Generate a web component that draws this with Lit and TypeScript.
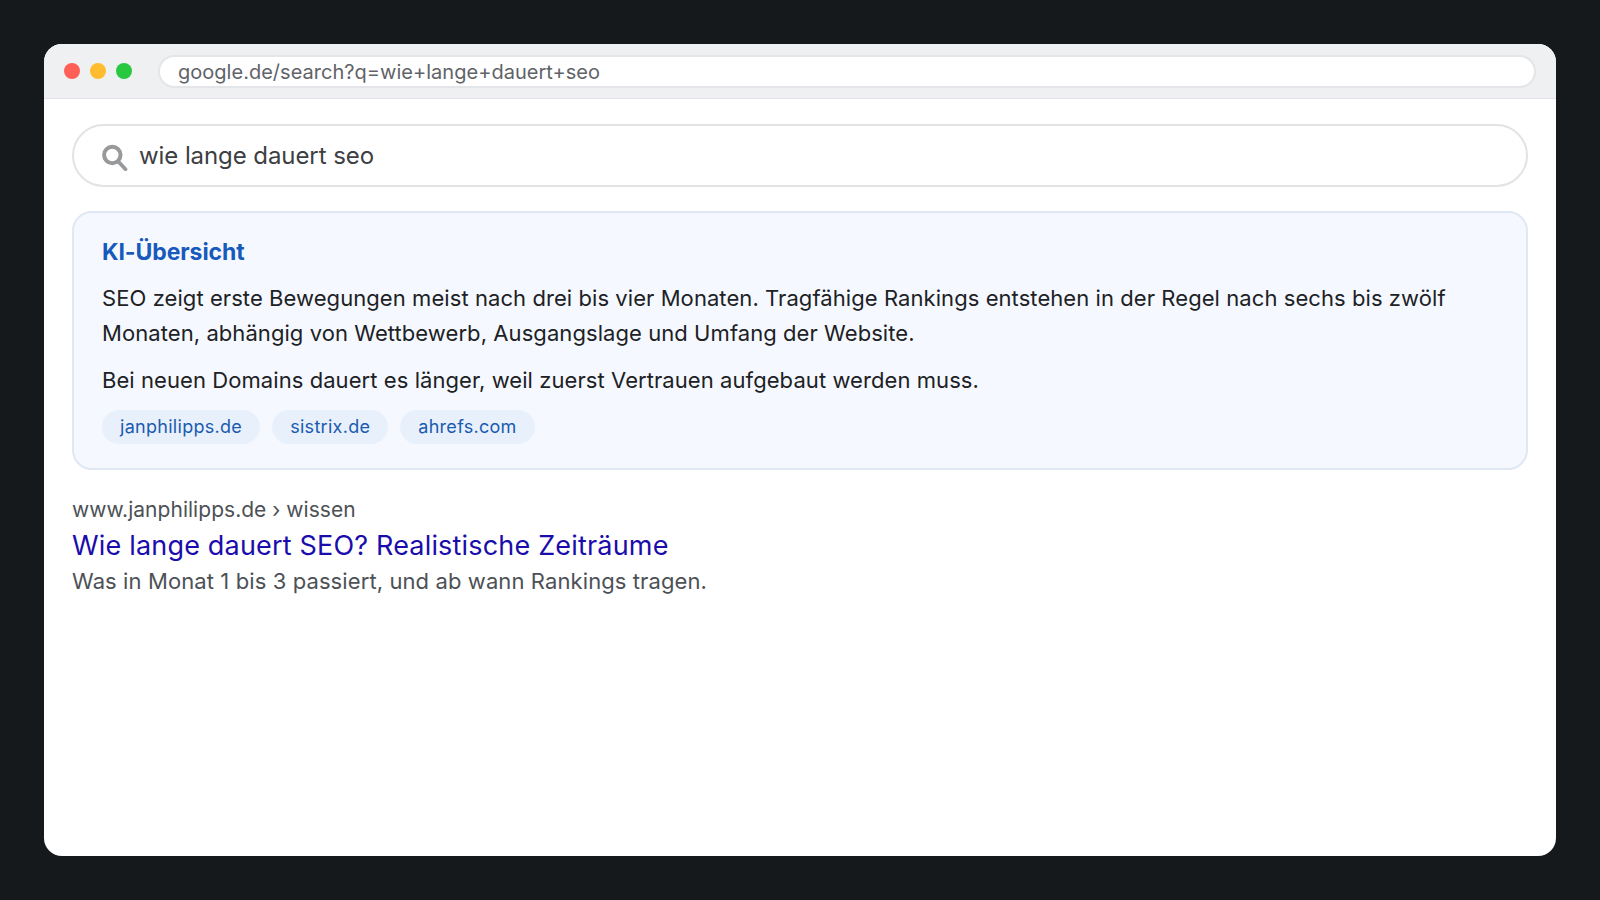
import { LitElement, html, css } from "lit";
import { customElement } from "lit/decorators.js";

@customElement("app-root")
export class AppRoot extends LitElement {
  static styles = css`
    :host { display: block; width: 1600px; height: 900px; box-sizing: border-box; padding: 44px; background: #15191c; font-family: Inter, "Liberation Sans", sans-serif; }
    .window { height: 812px; background: #fff; border-radius: 18px; overflow: hidden; }
    .toolbar { height: 55px; box-sizing: border-box; background: #eff0f2; border-bottom: 1px solid #e1e3e7; display: flex; align-items: center; padding: 0 20px; }
    .dots { display: flex; gap: 10px; margin-right: 26px; }
    .dot { width: 16px; height: 16px; border-radius: 50%; }
    .red { background: #ff5f57; } .yellow { background: #febc2e; } .green { background: #28c840; }
    .address { flex: 1; height: 33px; box-sizing: border-box; background: #fff; border: 2px solid #e4e5e8; border-radius: 17px; padding: 0 18px; font-size: 20px; letter-spacing: 0.02px; line-height: 31px; color: #5f6368; }
    .content { padding: 25px 28px; display: flex; flex-direction: column; }
    .search { height: 63px; box-sizing: border-box; border: 2px solid #e3e3e5; border-radius: 32px; display: flex; align-items: center; gap: 11px; padding: 0 27px; font-size: 24px; letter-spacing: -0.08px; color: #3c4043; }
    .search svg { display: block; flex: none; }
    .card { margin-top: 24px; border: 2px solid #dfe8f3; border-radius: 20px; background: #f5f9ff; padding: 24px 28px; height: 259px; box-sizing: border-box; }
    .card h2 { margin: 0; font-size: 23px; letter-spacing: -0.08px; line-height: 31px; font-weight: 700; color: #185abc; }
    .card p { margin: 0; font-size: 22px; letter-spacing: 0.07px; line-height: 35.2px; color: #202124; }
    .card p.first { margin-top: 13px; }
    .card p.second { margin-top: 12px; }
    .chips { display: flex; gap: 12px; margin-top: 11px; }
    .chip { height: 34px; line-height: 34px; padding: 0 18px; border-radius: 17px; background: #e8f0fb; color: #1a5bb0; font-size: 18px; letter-spacing: 0.29px; }
    .result { margin-top: 26px; }
    .url { font-size: 21px; letter-spacing: 0.03px; line-height: 28px; color: #4d5156; }
    .title { font-size: 27px; letter-spacing: 0.18px; line-height: 38px; color: #1a0dab; margin-top: 3px; }
    .desc { font-size: 22px; letter-spacing: 0.1px; line-height: 28px; color: #4d5156; margin-top: 2px; }
  `;
  render() {
    return html`<div class="window">
      <div class="toolbar">
        <div class="dots"><span class="dot red"></span><span class="dot yellow"></span><span class="dot green"></span></div>
        <div class="address">google.de/search?q=wie+lange+dauert+seo</div>
      </div>
      <div class="content">
        <div class="search">
          <svg width="27" height="30" viewBox="0 0 27 30" fill="none" stroke="#98999b" stroke-width="4" stroke-linecap="round"><circle cx="11.3" cy="14" r="8.2"/><path d="M17.5 20.8l7 7.4" stroke-width="3.8"/></svg>
          <span>wie lange dauert seo</span>
        </div>
        <div class="card">
          <h2>KI-Übersicht</h2>
          <p class="first">SEO zeigt erste Bewegungen meist nach drei bis vier Monaten. Tragfähige Rankings entstehen in der Regel nach sechs bis zwölf Monaten, abhängig von Wettbewerb, Ausgangslage und Umfang der Website.</p>
          <p class="second">Bei neuen Domains dauert es länger, weil zuerst Vertrauen aufgebaut werden muss.</p>
          <div class="chips"><span class="chip">janphilipps.de</span><span class="chip">sistrix.de</span><span class="chip">ahrefs.com</span></div>
        </div>
        <div class="result">
          <div class="url">www.janphilipps.de › wissen</div>
          <div class="title">Wie lange dauert SEO? Realistische Zeiträume</div>
          <div class="desc">Was in Monat 1 bis 3 passiert, und ab wann Rankings tragen.</div>
        </div>
      </div>
    </div>`;
  }
}
